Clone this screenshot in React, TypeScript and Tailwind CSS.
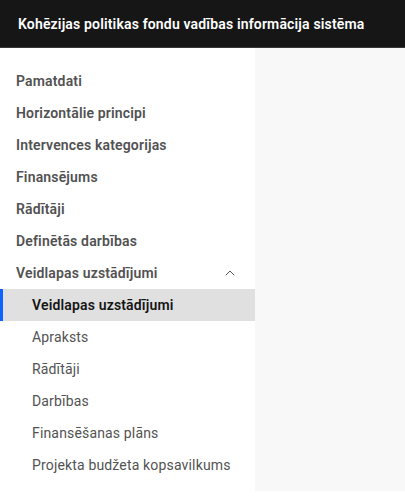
import { ChevronUp } from "lucide-react";

const topItems = [
  "Pamatdati",
  "Horizontālie principi",
  "Intervences kategorijas",
  "Finansējums",
  "Rādītāji",
  "Definētās darbības",
];

const subItems = [
  "Veidlapas uzstādījumi",
  "Apraksts",
  "Rādītāji",
  "Darbības",
  "Finansēšanas plāns",
  "Projekta budžeta kopsavilkums",
];

export default function App() {
  return (
    <div className="min-h-screen bg-white font-['Roboto',sans-serif] tracking-[0.16px]">
      {/* Header */}
      <header className="h-12 bg-[#161616] border-b border-[#393939] flex items-center pl-[18px] pt-[1px]">
        <span className="text-white text-sm font-semibold">
          Kohēzijas politikas fondu vadības informācija sistēma
        </span>
      </header>

      <div className="flex">
        {/* Side nav */}
        <nav className="w-[255px] bg-white pt-[17px] pb-[10px]">
          <ul>
            {topItems.map((item) => (
              <li key={item} className="h-8 flex items-center px-4 text-sm font-semibold text-[#525252]">
                {item}
              </li>
            ))}
            <li>
              <div className="h-8 flex items-center justify-between px-4 text-sm font-semibold text-[#525252]">
                <span>Veidlapas uzstādījumi</span>
                <ChevronUp className="w-4 h-4 mr-[1px] text-[#525252]" strokeWidth={1.5} />
              </div>
              <ul>
                {subItems.map((item, i) => (
                  <li
                    key={item}
                    className={
                      i === 0
                        ? "h-8 flex items-center pl-[29px] text-sm font-semibold text-[#161616] bg-[#e0e0e0] border-l-[3px] border-[#0f62fe]"
                        : "h-8 flex items-center pl-8 text-sm text-[#525252]"
                    }
                  >
                    {item}
                  </li>
                ))}
              </ul>
            </li>
          </ul>
        </nav>

        {/* Content */}
        <main className="flex-1 bg-[#f8f8f8]" />
      </div>
    </div>
  );
}
